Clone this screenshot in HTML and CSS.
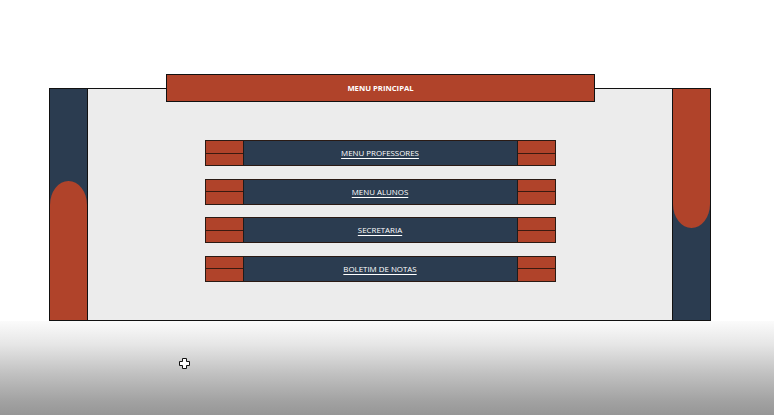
FILE: index.html
```html
<!DOCTYPE html>
<html lang="pt">
<head>
<meta charset="utf-8">
<title>Menu Principal</title>
<link rel="stylesheet" href="styles.css">
</head>
<body>
<div class="sheet">
  <div class="panel">
    <div class="title-bar">MENU PRINCIPAL</div>
    <div class="side side-left"><div class="pill pill-up"></div></div>
    <div class="center">
      <div class="menu">
        <a class="btn" href="#"><span class="cap"><i></i><i></i></span><span class="label">MENU PROFESSORES</span><span class="cap"><i></i><i></i></span></a>
        <a class="btn" href="#"><span class="cap"><i></i><i></i></span><span class="label">MENU ALUNOS</span><span class="cap"><i></i><i></i></span></a>
        <a class="btn" href="#"><span class="cap"><i></i><i></i></span><span class="label">SECRETARIA</span><span class="cap"><i></i><i></i></span></a>
        <a class="btn" href="#"><span class="cap"><i></i><i></i></span><span class="label">BOLETIM DE NOTAS</span><span class="cap"><i></i><i></i></span></a>
      </div>
    </div>
    <div class="side side-right"><div class="pill pill-down"></div></div>
  </div>
</div>
<div class="shade">
  <svg class="cursor" width="11" height="11" viewBox="0 0 11 11"><path d="M3.5 0.5h4v3h3v4h-3v3h-4v-3h-3v-4h3z" fill="#fff" stroke="#111" stroke-width="1"/></svg>
</div>
</body>
</html>
```
FILE: styles.css
```css
html, body {
  margin: 0;
  padding: 0;
  background: #fff;
  font-family: "Open Sans", "Liberation Sans", sans-serif;
  overflow: hidden;
}
.sheet {
  height: 321px;
  padding: 88px 0 0 49px;
  box-sizing: border-box;
}
.panel {
  position: relative;
  width: 662px;
  height: 233px;
  box-sizing: border-box;
  border: 1.5px solid #111;
  background: #ececec;
  display: grid;
  grid-template-columns: 38px 1fr 38px;
}
.title-bar {
  position: absolute;
  left: 116px;
  top: -15px;
  width: 429px;
  height: 28px;
  box-sizing: border-box;
  border: 1.5px solid #111;
  background: #b0432a;
  color: #fff;
  font-size: 7.7px;
  font-weight: 700;
  display: flex;
  align-items: center;
  justify-content: center;
  z-index: 2;
}
.side {
  background: #2b3c50;
  display: flex;
  flex-direction: column;
  overflow: hidden;
}
.side-left {
  border-right: 1.5px solid #111;
  justify-content: flex-end;
}
.side-right {
  border-left: 1.5px solid #111;
  background: #2b3c50;
}
.pill {
  background: #b0432a;
}
.pill-up {
  height: 139px;
  border-radius: 50% 50% 0 0 / 24px 24px 0 0;
}
.pill-down {
  height: 139px;
  border-radius: 0 0 50% 50% / 0 0 24px 24px;
}
.center {
  display: flex;
  justify-content: center;
  padding-top: 51px;
}
.menu {
  width: 351px;
  display: flex;
  flex-direction: column;
  gap: 12.5px;
}
.btn {
  height: 26px;
  box-sizing: border-box;
  border: 1px solid #2a1a14;
  display: grid;
  grid-template-columns: 38px 1fr 38px;
  text-decoration: none;
}
.cap {
  background: #b0432a;
  display: flex;
  flex-direction: column;
}
.cap i {
  flex: 1;
}
.cap i + i {
  border-top: 1px solid #3a1a10;
}
.cap:first-child {
  border-right: 1px solid #1c1c1c;
}
.cap:last-child {
  border-left: 1px solid #1c1c1c;
}
.label {
  background: #2b3c50;
  color: #fff;
  font-size: 7.9px;
  text-decoration: underline;
  text-underline-offset: 1.5px;
  display: flex;
  align-items: center;
  justify-content: center;
}
.shade {
  height: 94px;
  background: linear-gradient(#fbfbfb, #e6e6e6 25%, #c2c2c2 55%, #a2a2a2 85%, #969696);
  padding: 37px 0 0 179px;
  box-sizing: border-box;
}
.cursor {
  display: block;
}
```
